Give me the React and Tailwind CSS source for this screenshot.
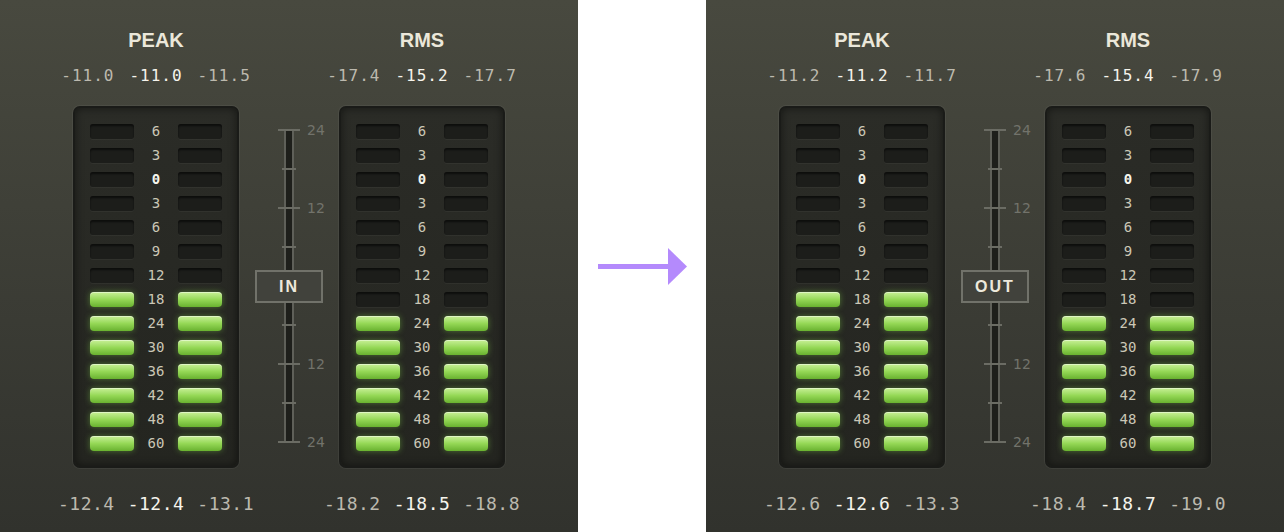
import React from "react";

const ROWS = ["6", "3", "0", "3", "6", "9", "12", "18", "24", "30", "36", "42", "48", "60"];

const STAGES = [
  {
    label: "IN",
    peak: { top: ["-11.0", "-11.0", "-11.5"], bottom: ["-12.4", "-12.4", "-13.1"], lit: 7 },
    rms: { top: ["-17.4", "-15.2", "-17.7"], bottom: ["-18.2", "-18.5", "-18.8"], lit: 6 },
  },
  {
    label: "OUT",
    peak: { top: ["-11.2", "-11.2", "-11.7"], bottom: ["-12.6", "-12.6", "-13.3"], lit: 7 },
    rms: { top: ["-17.6", "-15.4", "-17.9"], bottom: ["-18.4", "-18.7", "-19.0"], lit: 6 },
  },
];

const mono = "font-['DejaVu_Sans_Mono',monospace]";

function Led({ on }) {
  if (on) {
    return (
      <div className="h-[15px] w-[44px] rounded-[4px] bg-linear-to-b from-[#c8f096] via-[#95d856] to-[#69b22f] shadow-[0_0_6px_rgba(130,210,70,0.45),inset_0_1px_0_rgba(255,255,255,0.45)]" />
    );
  }
  return (
    <div className="h-[15px] w-[44px] rounded-[3px] bg-[#1c1d1a] shadow-[inset_0_2px_2px_rgba(0,0,0,0.55),0_1px_0_rgba(255,255,255,0.04)]" />
  );
}

function Readout({ values, big }) {
  return (
    <div
      className={`flex whitespace-nowrap ${mono} ${
        big ? "gap-[13px] text-[18px] leading-[24px] tracking-[0.5px]" : "gap-[15px] text-[16px] leading-[20px] tracking-[1px]"
      }`}
    >
      {values.map((v, i) => (
        <span key={i} className={i === 1 ? "text-[#f6f4ec]" : "text-[#bcb9ae]"}>
          {v}
        </span>
      ))}
    </div>
  );
}

function Meter({ title, data }) {
  const firstLit = ROWS.length - data.lit;
  return (
    <div className="flex w-[166px] flex-col items-center pt-[28px]">
      <div className="font-['Liberation_Sans',Arial,sans-serif] text-[20px] font-bold leading-[24px] text-[#ebe7da]">
        {title}
      </div>
      <div className="mt-[14px]">
        <Readout values={data.top} />
      </div>
      <div className="mt-[20px] flex w-[166px] flex-col gap-[9px] rounded-[7px] border-2 border-[#1a1b18] bg-linear-to-b from-[#2b2c27] to-[#242520] px-[15px] pt-[16px] pb-[15px] shadow-[inset_0_0_8px_rgba(0,0,0,0.5),0_0_0_1px_rgba(255,255,255,0.05)]">
        {ROWS.map((r, i) => (
          <div key={i} className="grid grid-cols-[44px_44px_44px] items-center">
            <Led on={i >= firstLit} />
            <span
              className={`text-center text-[14px] leading-[15px] ${mono} ${
                r === "0" && i === 2 ? "font-bold text-[#f6f4ec]" : "text-[#cbc7b6]"
              }`}
            >
              {r}
            </span>
            <Led on={i >= firstLit} />
          </div>
        ))}
      </div>
      <div className="mt-[24px]">
        <Readout values={data.bottom} big />
      </div>
    </div>
  );
}

const TICK_MAJOR = [0, 2, 6, 8];
const SCALE_LABELS = ["24", null, "12", null, null, null, "12", null, "24"];

function Scale({ label }) {
  return (
    <div className="w-[100px] pt-[129px]">
      <div className="relative h-[314px]">
        <svg width="100" height="314" className="block">
          <rect x="45" y="0" width="10" height="314" fill="#5f6059" />
          <rect x="47" y="0" width="6" height="314" fill="#1e1f1b" />
          {Array.from({ length: 9 }).map((_, i) => {
            const y = 1 + i * 39;
            const major = TICK_MAJOR.includes(i);
            return (
              <line
                key={i}
                x1={major ? 39 : 43}
                x2={major ? 61 : 57}
                y1={y}
                y2={y}
                stroke="#6b6c64"
                strokeWidth="2"
              />
            );
          })}
        </svg>
        {SCALE_LABELS.map((t, i) =>
          t ? (
            <span
              key={i}
              className="absolute left-[68px] font-['DejaVu_Sans',sans-serif] text-[14px] leading-[16px] text-[#72736b]"
              style={{ top: 1 + i * 39 - 8 }}
            >
              {t}
            </span>
          ) : null
        )}
        <div className="absolute left-[16px] top-[141px] flex h-[33px] w-[68px] items-center justify-center border-2 border-[#71726a] bg-[#41423c] font-['Liberation_Sans',Arial,sans-serif] text-[16px] font-bold tracking-[2px] text-[#ede9dc]">
          {label}
        </div>
      </div>
    </div>
  );
}

function Panel({ stage }) {
  return (
    <div className="flex h-[532px] w-[578px] items-start bg-linear-to-b from-[#48493f] to-[#31322d] px-[73px]">
      <Meter title="PEAK" data={stage.peak} />
      <Scale label={stage.label} />
      <Meter title="RMS" data={stage.rms} />
    </div>
  );
}

export default function App() {
  return (
    <div className="flex h-[532px] w-[1284px] bg-white">
      <Panel stage={STAGES[0]} />
      <div className="flex w-[128px] items-center justify-center">
        <svg width="89" height="37" viewBox="0 0 89 37" className="block">
          <rect x="0" y="16" width="71" height="5" fill="#b48afc" />
          <polygon points="70,0 89,18.5 70,37" fill="#b48afc" />
        </svg>
      </div>
      <Panel stage={STAGES[1]} />
    </div>
  );
}
